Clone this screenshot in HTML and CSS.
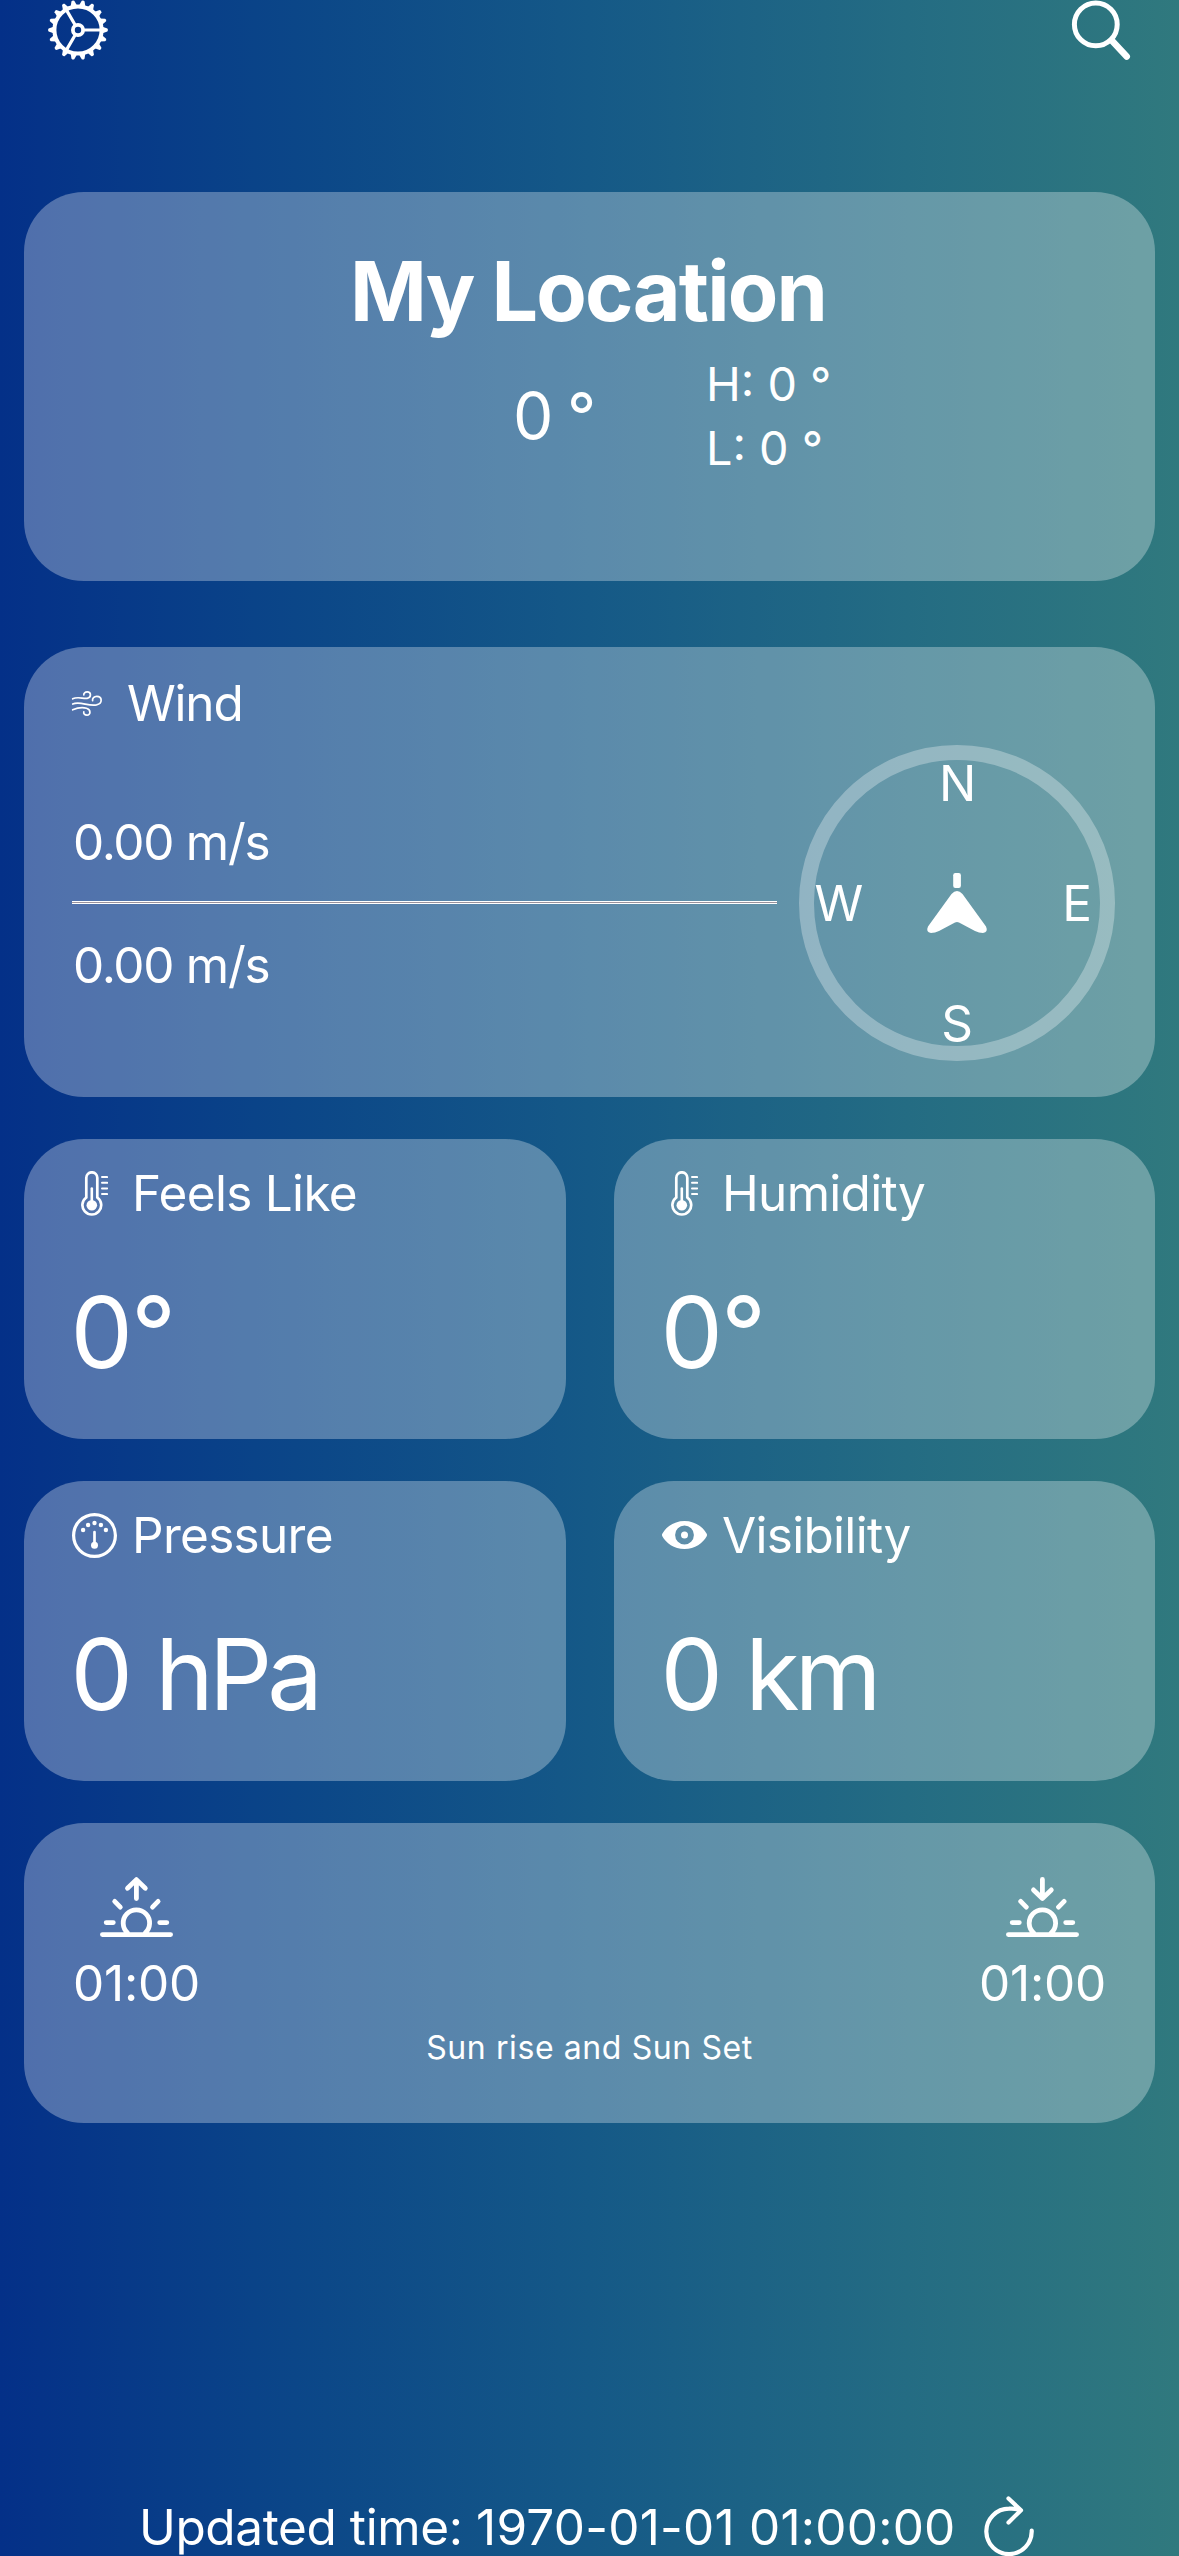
FILE: index.html
```html
<!DOCTYPE html>
<html lang="en">
<head>
<meta charset="utf-8">
<title>Weather</title>
<link rel="stylesheet" href="styles.css">
</head>
<body>
<svg class="defs" aria-hidden="true">
  <defs>
    <path id="tooth" d="M54.5 26.8 L59.4 28.6 Q60.6 30 59.4 31.4 L54.5 33.2z"/>
    <symbol id="thermometer" viewBox="0 0 27 45">
      <path d="M5.3 26.5V6.8a5.5 5.5 0 0 1 11 0V26.5A9.4 9.4 0 1 1 5.3 26.5z" fill="none" stroke="#fff" stroke-width="2.7"/>
      <path d="M10.8 17.5V34" stroke="#fff" stroke-width="2.6" stroke-linecap="round"/>
      <circle cx="10.8" cy="34.2" r="5.3" fill="#fff"/>
      <path d="M21 6.1h5.2M21 11.8h5.2M21 17.4h5.2M21 23.1h5.2" stroke="#fff" stroke-width="2" stroke-linecap="round"/>
    </symbol>
    <symbol id="horizon" viewBox="0 0 73 60">
      <path d="M2.4 57.6H70.6M27.7 56A13.2 13.2 0 1 1 45.1 56M6.2 45.6H13.3M59.7 45.6H66.8M14.7 24.4L20.3 30.1M58.1 24.4L52.5 30.1" fill="none" stroke="#fff" stroke-width="4.8" stroke-linecap="round"/>
    </symbol>
  </defs>
</svg>
<main class="screen">
  <header class="topbar">
    <svg width="60" height="60" viewBox="0 0 60 60" fill="#fff">
      <circle cx="30" cy="30" r="23.6" fill="none" stroke="#fff" stroke-width="4"/>
      <circle cx="30" cy="30" r="5.1" fill="none" stroke="#fff" stroke-width="3.8"/>
      <path d="M36 30H53M27 24.8L18.5 10.1M27 35.2L18.5 49.9" stroke="#fff" stroke-width="3.2"/>
      <use href="#tooth"/><use href="#tooth" transform="rotate(20 30 30)"/><use href="#tooth" transform="rotate(40 30 30)"/>
      <use href="#tooth" transform="rotate(60 30 30)"/><use href="#tooth" transform="rotate(80 30 30)"/><use href="#tooth" transform="rotate(100 30 30)"/>
      <use href="#tooth" transform="rotate(120 30 30)"/><use href="#tooth" transform="rotate(140 30 30)"/><use href="#tooth" transform="rotate(160 30 30)"/>
      <use href="#tooth" transform="rotate(180 30 30)"/><use href="#tooth" transform="rotate(200 30 30)"/><use href="#tooth" transform="rotate(220 30 30)"/>
      <use href="#tooth" transform="rotate(240 30 30)"/><use href="#tooth" transform="rotate(260 30 30)"/><use href="#tooth" transform="rotate(280 30 30)"/>
      <use href="#tooth" transform="rotate(300 30 30)"/><use href="#tooth" transform="rotate(320 30 30)"/><use href="#tooth" transform="rotate(340 30 30)"/>
    </svg>
    <svg width="60" height="60" viewBox="0 0 60 60" fill="none" stroke="#fff" stroke-linecap="round">
      <circle cx="24.8" cy="24.4" r="21.4" stroke-width="5"/>
      <path d="M41.5 41.2L55.7 56.6" stroke-width="6.6"/>
    </svg>
  </header>

  <section class="card location">
    <h1 class="title">My Location</h1>
    <div class="temps">
      <span class="temp">0 °</span>
      <div class="range"><span>H: 0 °</span><span>L: 0 °</span></div>
    </div>
  </section>

  <section class="card wind">
    <div class="wind-head">
      <svg width="30" height="25" viewBox="0 0 30 25" fill="none" stroke="#fff" stroke-width="1.7" stroke-linecap="round">
        <path d="M.7 7.8C6 5.2 11 8 15.2 7.3C19.6 6.5 19.4 .9 15.2 .9C13 .9 11.6 2.2 11.8 3.9"/>
        <path d="M.7 13C8 9.8 16 15.5 24.5 13.9C31 12.5 30.3 5.4 24.8 5.4C22 5.4 20.2 7.3 20.6 9.7"/>
        <path d="M.7 18.8C6 16.5 11 16.2 14.5 17.2C19.2 18.5 18.8 24.1 15 24.1C12.6 24.1 11.3 22.5 11.8 20.9"/>
      </svg>
      <span class="label label-wind">Wind</span>
    </div>
    <div class="wind-body">
      <div class="speeds">
        <span class="speed">0.00 m/s</span>
        <div class="rule"></div>
        <span class="speed">0.00 m/s</span>
      </div>
      <div class="compass">
        <span class="point n">N</span>
        <span class="point w">W</span>
        <svg width="60" height="60" viewBox="0 0 60 60" fill="#fff">
          <rect x="26.2" y="0" width="7.7" height="15" rx="2.2"/>
          <path d="M24.5 21Q30 15 35.5 21L59 53.5Q61.5 59 56 60Q52 60 48 58L32 49.5Q30 48.5 28 49.5L12 58Q8 60 4 60Q-1.5 59 1 53.5z"/>
        </svg>
        <span class="point e">E</span>
        <span class="point s">S</span>
      </div>
    </div>
  </section>

  <section class="tiles">
    <article class="card tile">
      <div class="tile-head"><span class="icon"><svg width="27" height="45"><use href="#thermometer"/></svg></span><span class="label">Feels Like</span></div>
      <span class="value value-deg">0°</span>
    </article>
    <article class="card tile">
      <div class="tile-head"><span class="icon"><svg width="27" height="45"><use href="#thermometer"/></svg></span><span class="label">Humidity</span></div>
      <span class="value value-deg">0°</span>
    </article>
    <article class="card tile">
      <div class="tile-head"><span class="icon">
        <svg width="45" height="45" viewBox="0 0 45 45" fill="#fff">
          <circle cx="22.5" cy="22.5" r="20.9" fill="none" stroke="#fff" stroke-width="3.2"/>
          <circle cx="11.1" cy="17" r="2.2"/><circle cx="16.1" cy="12" r="2.2"/><circle cx="22.5" cy="10" r="2.2"/><circle cx="28.9" cy="12" r="2.2"/><circle cx="33.9" cy="17" r="2.2"/>
          <path d="M22.5 19V31" stroke="#fff" stroke-width="2.7" stroke-linecap="round"/>
          <circle cx="22.5" cy="32.3" r="3.5"/>
        </svg></span><span class="label">Pressure</span></div>
      <span class="value">0 hPa</span>
    </article>
    <article class="card tile">
      <div class="tile-head"><span class="icon">
        <svg width="45" height="28" viewBox="0 0 45 28" fill="#fff">
          <path fill-rule="evenodd" d="M.3 15.2Q-.3 14 .3 12.8C4 6 12 0 22.5 0S41 6 44.7 12.8Q45.300 14 44.7 15.2C41 22 33 28 22.5 28S4 22 .3 15.2zM22.5 4.6a9.400 9.400 0 1 0 0 18.8a9.400 9.400 0 1 0 0-18.8z"/>
          <circle cx="22.5" cy="14" r="3.5"/>
        </svg></span><span class="label">Visibility</span></div>
      <span class="value">0 km</span>
    </article>
  </section>

  <section class="card sun">
    <div class="sun-times">
      <div class="sun-time">
        <svg width="73" height="60" viewBox="0 0 73 60" fill="none" stroke="#fff" stroke-width="4.8" stroke-linecap="round" stroke-linejoin="round"><use href="#horizon"/><path d="M36.4 3V21.5M27.5 11.3L36.4 2.6L45.3 11.3"/></svg>
        <span class="clock">01:00</span>
      </div>
      <div class="sun-time">
        <svg width="73" height="60" viewBox="0 0 73 60" fill="none" stroke="#fff" stroke-width="4.8" stroke-linecap="round" stroke-linejoin="round"><use href="#horizon"/><path d="M36.4 2.4V20.5M27.5 12.9L36.4 21.4L45.3 12.9"/></svg>
        <span class="clock">01:00</span>
      </div>
    </div>
    <p class="caption">Sun rise and Sun Set</p>
  </section>

  <footer class="updated">
    <span class="updated-text">Updated time: <time class="stamp">1970-01-01 01:00:00</time></span>
    <svg width="50" height="60" viewBox="0 0 50 60" fill="none" stroke="#fff" stroke-width="4.2" stroke-linecap="round" stroke-linejoin="round"><path d="M47.7 34.5A22.7 22.7 0 1 1 25 12.7Q30 12.2 36 13.8M24.5 2.5L37 14.2L24.5 26.5"/></svg>
  </footer>
</main>
</body>
</html>
```
FILE: styles.css
```css
* { box-sizing: border-box; }

body {
  margin: 0;
  font-family: Inter, "Liberation Sans", sans-serif;
  color: #fff;
}

svg { display: block; flex: none; overflow: visible; }
.defs { width: 0; height: 0; position: absolute; }

.screen {
  width: 1179px;
  height: 2556px;
  overflow: hidden;
  display: flex;
  flex-direction: column;
  background: linear-gradient(90deg, #043088 0%, #0b4688 25%, #155987 50%, #246c83 77%, #30797e 100%);
  font-size: 49.5px;
  line-height: 60px;
  white-space: nowrap;
}

.topbar {
  display: flex;
  justify-content: space-between;
  padding: 0 48px;
  margin-bottom: 132px;
}

.card {
  background: rgba(255, 255, 255, 0.3);
  border-radius: 60px;
  margin: 0 24px;
}

/* Location summary */
.location { height: 389px; padding-top: 49px; }
.title {
  margin: 0 0 11px;
  padding-right: 3px;
  font-size: 82.5px;
  line-height: 100px;
  font-weight: 700;
  letter-spacing: -1.8px;
  text-align: center;
}
.temps {
  display: grid;
  grid-template-columns: 193px auto;
  align-items: center;
  padding-left: 489px;
}
.temp { font-size: 64px; line-height: 78px; letter-spacing: -2.2px; }
.range {
  display: flex;
  flex-direction: column;
  font-size: 46.8px;
  line-height: 64px;
}

/* Wind */
.wind { height: 450px; margin-top: 66px; padding: 26px 40px 0 48px; }
.wind-head { display: flex; align-items: center; gap: 25px; }
.label { letter-spacing: -0.7px; }
.label-wind { letter-spacing: -1.2px; }
.wind-body { display: flex; justify-content: space-between; margin-top: 12px; }
.speeds { width: 705px; padding-top: 67px; display: flex; flex-direction: column; }
.speed { letter-spacing: -1.3px; padding-left: 1px; }
.rule {
  height: 3px;
  margin: 29px 0 31px;
  background: #9a929c;
  border: solid #fff;
  border-width: 1px 0;
}
.compass {
  width: 315.6px;
  height: 315.6px;
  display: grid;
  grid-template: repeat(3, 60px) / 60px 1fr 60px;
  row-gap: 60px;
  align-content: center;
  align-items: center;
  justify-items: center;
  border: 15.5px solid rgba(255, 255, 255, 0.3);
  border-radius: 50%;
}
.n, .s { grid-column: 1 / -1; }
.n { padding-left: 1px; }
.w { justify-self: start; }
.e { justify-self: end; margin-right: 8px; }

/* Metric tiles */
.tiles {
  display: grid;
  grid-template-columns: 542px 541px;
  gap: 42px 48px;
  margin: 42px 24px;
}
.tile { height: 300px; margin: 0; padding: 24px 48px 0; }
.tile-head { display: flex; align-items: center; gap: 15px; margin-bottom: 49px; }
.icon { width: 45px; display: flex; justify-content: center; }
.value {
  display: block;
  margin-left: -1.5px;
  font-size: 99px;
  line-height: 120px;
  letter-spacing: -4.8px;
  word-spacing: 4px;
}
.value-deg { letter-spacing: -2px; }

/* Sun times */
.sun { height: 300px; padding: 54px 49px 0; }
.sun-times { display: flex; justify-content: space-between; }
.sun-time { display: flex; flex-direction: column; align-items: center; gap: 16px; }
.clock { letter-spacing: -0.2px; }
.caption {
  margin: 15px 0 0;
  font-size: 32px;
  line-height: 40px;
  letter-spacing: 0.6px;
  text-align: center;
}

.updated {
  display: flex;
  gap: 28px;
  height: 60px;
  margin-top: auto;
  padding-left: 139px;
}
.updated-text { padding-top: 1px; letter-spacing: -0.4px; }
.stamp { letter-spacing: 0.22px; }
```
